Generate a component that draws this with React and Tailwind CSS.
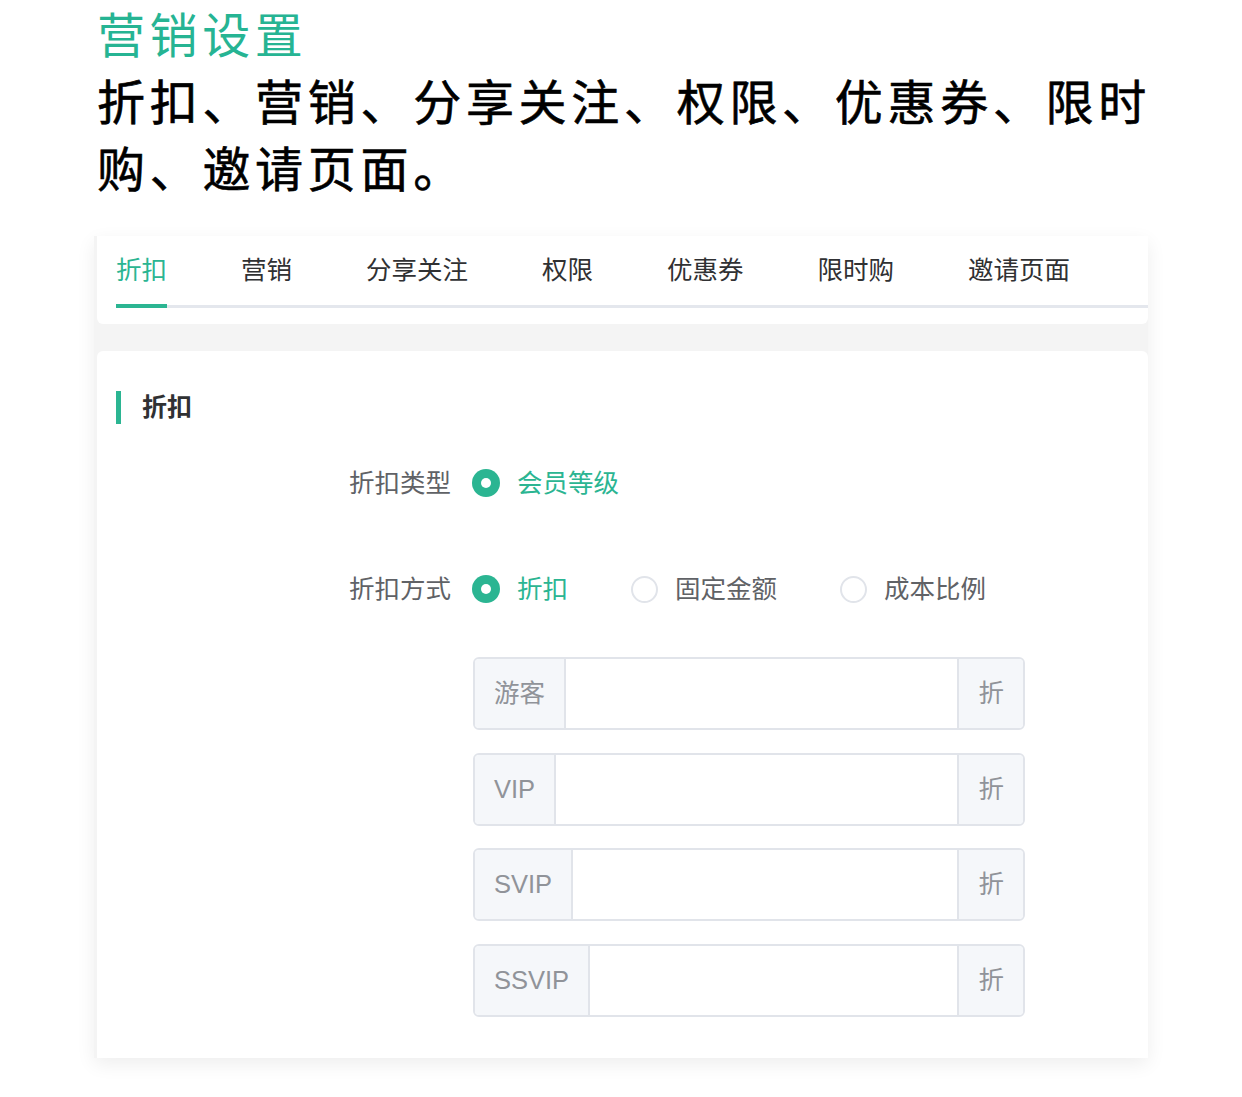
import React from 'react'

const TABS = ['折扣', '营销', '分享关注', '权限', '优惠券', '限时购', '邀请页面']

const LEVELS = ['游客', 'VIP', 'SVIP', 'SSVIP']

function Radio({ checked, label }) {
  return (
    <label className="flex items-center gap-[17px]">
      {checked ? (
        <span className="w-[28px] h-[28px] rounded-full bg-[#2bb592] flex items-center justify-center">
          <span className="w-[10px] h-[10px] rounded-full bg-white" />
        </span>
      ) : (
        <span className="w-[27px] h-[27px] rounded-full border-2 border-[#e1e4ea] bg-white" />
      )}
      <span className={checked ? 'text-[#2bb592]' : 'text-[#606266]'}>{label}</span>
    </label>
  )
}

function FormRow({ label, children }) {
  return (
    <div className="flex items-center h-[50px]">
      <div className="w-[354px] text-right text-[#606266]">{label}</div>
      <div className="ml-[21px] flex items-center gap-[63px]">{children}</div>
    </div>
  )
}

export default function App() {
  return (
    <div
      className="bg-white min-h-[1097px] w-[1242px] overflow-hidden"
      style={{ fontFamily: '"Liberation Sans", "Noto Sans CJK SC", sans-serif' }}
    >
      {/* heading */}
      <div className="pl-[97px] pt-[3px] w-[1177px]">
        <h1 className="text-[48px] leading-[67px] tracking-[4.6px] text-[#26b493]">营销设置</h1>
        <p className="text-[48px] leading-[67px] tracking-[4.7px] text-black [-webkit-text-stroke:0.6px_black]">
          折扣、营销、分享关注、权限、优惠券、限时购、邀请页面。
        </p>
      </div>

      {/* screenshot panel */}
      <div className="ml-[94px] mt-[32px] w-[1054px] bg-[#f4f4f4] pl-[3px] shadow-[0_6px_18px_rgba(0,0,0,0.07)] text-[25.5px]">
        {/* tabs */}
        <div className="bg-white rounded-b-[6px] h-[88px] pl-[19px]">
          <div className="flex gap-[74px] border-b-[3px] border-[#e4e7ed]">
            {TABS.map((t, i) => (
              <div
                key={t}
                className={`relative h-[69px] flex items-center ${i === 0 ? 'text-[#2bb592]' : 'text-[#303133]'}`}
              >
                {t}
                {i === 0 && <span className="absolute left-0 right-0 -bottom-[3px] h-[4px] bg-[#2bb592]" />}
              </div>
            ))}
          </div>
        </div>

        {/* form card */}
        <div className="mt-[27px] bg-white rounded-t-[6px] h-[707px] pt-[40px]">
          <div className="flex items-center ml-[19px] h-[33px]">
            <span className="w-[5px] h-[33px] bg-[#2bb592]" />
            <span className="ml-[21px] font-bold text-[#303133] text-[25px]">折扣</span>
          </div>

          <div className="mt-[34px]">
            <FormRow label="折扣类型">
              <Radio checked label="会员等级" />
            </FormRow>
          </div>
          <div className="mt-[56px]">
            <FormRow label="折扣方式">
              <Radio checked label="折扣" />
              <Radio label="固定金额" />
              <Radio label="成本比例" />
            </FormRow>
          </div>

          <div className="mt-[43px] ml-[376px] w-[552px] flex flex-col gap-[22.5px]">
            {LEVELS.map((lv) => (
              <div key={lv} className="flex h-[73px] border-2 border-[#e1e4ea] rounded-[6px] overflow-hidden">
                <div className="bg-[#f5f7fa] px-[19px] flex items-center text-[#909399] border-r-2 border-[#e1e4ea]">
                  {lv}
                </div>
                <div className="flex-1 bg-white" />
                <div className="bg-[#f5f7fa] px-[19px] flex items-center text-[#909399] border-l-2 border-[#e1e4ea]">
                  折
                </div>
              </div>
            ))}
          </div>
        </div>
      </div>
    </div>
  )
}
